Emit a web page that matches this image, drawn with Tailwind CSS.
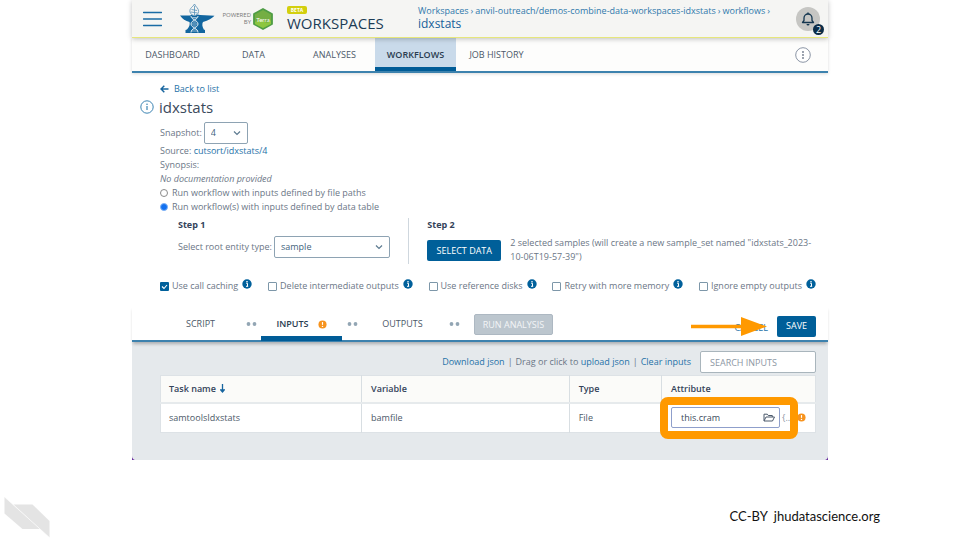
<!DOCTYPE html>
<html lang="en">
<head>
<meta charset="utf-8">
<meta name="viewport" content="width=device-width, initial-scale=1">
<title>idxstats - Workspaces</title>
<script src="https://cdn.jsdelivr.net/npm/@tailwindcss/browser@4"></script>
</head>
<body class="min-h-screen flex flex-col bg-white font-['Open_Sans','Noto_Sans',sans-serif] text-[9px] leading-[14px] text-[#6b7686]">

<svg class="hidden" aria-hidden="true">
  <symbol id="info" viewBox="0 0 10 10"><circle cx="5" cy="5" r="4.7" fill="#00609b"/><path d="M4.2 4.3h1.3v2.9M4 7.3h2.2" stroke="#fff" stroke-width="1" fill="none"/><circle cx="5" cy="2.7" r=".8" fill="#fff"/></symbol>
  <symbol id="warn" viewBox="0 0 10 10"><circle cx="5" cy="5" r="4.5" fill="#f7931e"/><path d="M5 2.3v3.1" stroke="#fff" stroke-width="1.3"/><circle cx="5" cy="7.1" r=".8" fill="#fff"/></symbol>
  <symbol id="chevron" viewBox="0 0 8 8"><path d="M1 2.5l3 3 3-3" fill="none" stroke="#5c7a90" stroke-width="1.2"/></symbol>
</svg>

<div class="relative w-[72.5%] mx-auto">
  <header class="relative z-10 flex items-center h-[38px] pl-[11px] pr-1 bg-[#f5f5f3] border-b border-[#e6e67c] shadow-[0_1px_5px_rgba(0,0,0,0.25)]">
    <button aria-label="Menu" class="shrink-0">
      <svg class="w-[19px] h-4 block" viewBox="0 0 19 16"><path d="M.5 1.5h18M.5 8h18M.5 14.5h18" stroke="#1a6ca5" stroke-width="1.5" stroke-linecap="round"/></svg>
    </button>
    <svg class="w-[35px] h-[30px] ml-[18px] shrink-0" viewBox="0 0 35 30" aria-label="AnVIL">
      <path d="M0 11.500h10Q14.500 9.500 20 11l14.500.8Q31 15.500 23 18q-1.700 3 .8 7.500l1.200.5v3H5.500v-3l1.500-.5q3.500-4 2.500-7.500Q3.500 16.500 0 11.500z" fill="#12669f"/>
      <path d="M14.500 0c-1.500 3-5.300 4-4.500 8 .6 2.500 3 3.500 4.500 3.500S18.500 10 18.600 7.500C18.700 4 15.500 3 14.500 0z" fill="#f5f5f3" stroke="#6f9fc0" stroke-width="1"/>
      <path d="M11.500 5.500l5.500 1M11 8l6.500 1M14.500 2v9" stroke="#5590b8" stroke-width=".8"/>
      <path d="M11 12c0 4 7 4 7 8s-7 4-7 8.500M18 12c0 4-7 4-7 8s7 4 7 8.500" fill="none" stroke="#e8f0f5" stroke-width="1"/>
      <path d="M12 13.500h5M13 15h3M12.500 18h4M11.500 20h6M12.500 22h4M13 25h3M11.500 27h6" stroke="#c8dce9" stroke-width=".7"/>
    </svg>
    <div class="ml-1 w-8 text-right text-[6px] leading-[7px] text-[#777] shrink-0">POWERED<br>BY</div>
    <svg class="w-[22px] h-[22px] ml-[1px] shrink-0" viewBox="0 0 22 22" aria-label="Terra">
      <path d="M11 1l9 5v10l-9 5-9-5V6z" fill="#74ae43" stroke="#4f9d45" stroke-width="1.800" stroke-linejoin="round"/>
      <path d="M3 14q6-5 9-1t7-1v4l-8 4-8-4z" fill="#8cc63f"/>
      <text x="11" y="13.500" text-anchor="middle" font-family="Lato, sans-serif" font-size="6" fill="#fff">Terra</text>
    </svg>
    <div class="ml-[13px] w-[131px] shrink-0">
      <div class="w-5 h-2 rounded-xs bg-[#d3cf0e] text-white font-bold text-[5px] leading-[8px] text-center">BETA</div>
      <div class="text-[15px] leading-[18px] font-medium text-[#1c3c56]">WORKSPACES</div>
    </div>
    <nav aria-label="Breadcrumb" class="text-[#3079ac] leading-[12px] whitespace-nowrap -mt-[2px]">
      <div class="flex gap-[2px]"><a href="#">Workspaces</a><span>›</span><a href="#">anvil-outreach/demos-combine-data-workspaces-idxstats</a><span>›</span><a href="#">workflows</a><span>›</span></div>
      <div class="text-[12px] leading-[13px] font-medium text-[#17609a]">idxstats</div>
    </nav>
    <button aria-label="Notifications" class="relative ml-auto mr-1 w-6 h-6 rounded-full bg-[#c6c6c3] grid place-items-center shrink-0">
      <svg class="w-3.5 h-3.5" viewBox="0 0 14 14"><path d="M1.500 10.500h11L11 8.500V6a4 4 0 0 0-8 0v2.500z" fill="none" stroke="#14364f" stroke-width="1.300" stroke-linejoin="round"/><path d="M7 .5v1.500" stroke="#14364f" stroke-width="1.400"/><path d="M5.500 12h3a1.500 1.500 0 0 1-3 0z" fill="#14364f"/></svg>
      <span class="absolute -right-1 -bottom-1 w-[11px] h-[11px] rounded-full bg-[#0b2c47] text-white text-[9px] leading-[11px] text-center">2</span>
    </button>
  </header>

  <nav aria-label="Workspace" class="flex h-[35px] bg-[#fdfdfc] border-b-2 border-[#3d82ae] text-center leading-[34px] text-[#4b5868] shadow-[0_1px_3px_rgba(0,0,0,0.15)] whitespace-nowrap">
    <a href="#" class="w-[81px]">DASHBOARD</a>
    <a href="#" class="w-[81px]">DATA</a>
    <a href="#" class="w-[81px]">ANALYSES</a>
    <a href="#" class="w-[81px] bg-[#c9daea] border-b-4 border-[#005c97] font-semibold text-[#2a3c50]">WORKFLOWS</a>
    <a href="#" class="w-[81px]">JOB HISTORY</a>
    <button aria-label="Workspace menu" class="ml-auto mr-[17px]">
      <svg class="w-4 h-4 block" viewBox="0 0 16 16"><circle cx="8" cy="8" r="7.300" fill="#fff" stroke="#8b95a5"/><g fill="#6d7889"><circle cx="8" cy="5" r=".9"/><circle cx="8" cy="8" r=".9"/><circle cx="8" cy="11" r=".9"/></g></svg>
    </button>
  </nav>

  <main>
    <div class="pl-7 pr-3 pt-[9px]">
      <a href="#" class="flex items-center gap-[5px] font-medium text-[#2672a8]">
        <svg class="w-[9px] h-2" viewBox="0 0 9 8"><path d="M8.500 4H1M4.300.8L1 4l3.300 3.200" fill="none" stroke="#17659f" stroke-width="1.500"/></svg>Back to list</a>
      <div class="flex items-center h-[22px] gap-[5px] -ml-5">
        <svg class="w-[14px] h-[14px]" viewBox="0 0 14 14" aria-label="Info"><circle cx="7" cy="7" r="6.200" fill="none" stroke="#3c84b3"/><path d="M7 6v4" stroke="#3c84b3" stroke-width="1.200"/><circle cx="7" cy="4.200" r=".8" fill="#3c84b3"/></svg>
        <h1 class="text-[15px] leading-5 text-[#3b4a5c]">idxstats</h1>
      </div>
      <div class="flex items-center gap-[2px] mt-1">
        <label for="snap">Snapshot:</label>
        <div class="relative">
          <select id="snap" class="appearance-none block w-11 h-[22px] pl-[6px] border border-[#8ea3b3] rounded-xs bg-white text-[#42637c]"><option>4</option></select>
          <svg class="absolute right-[7px] top-[7px] w-2 h-2 pointer-events-none"><use href="#chevron"/></svg>
        </div>
      </div>
      <div>Source: <a href="#" class="font-medium text-[#2672a8]">cutsort/idxstats/4</a></div>
      <div>Synopsis:</div>
      <div class="italic">No documentation provided</div>
      <label class="flex items-center gap-1 h-[14px]"><input type="radio" name="mode" class="appearance-none w-2 h-2 rounded-full border border-[#8a8a8a] bg-white">Run workflow with inputs defined by file paths</label>
      <label class="flex items-center gap-1 h-[14px]"><input type="radio" name="mode" checked class="appearance-none w-2 h-2 rounded-full border border-[#7fb2f5] bg-[#1170f0]">Run workflow(s) with inputs defined by data table</label>

      <div class="flex mt-1 h-[46px]">
        <section class="w-[38%] pl-[18px] border-r border-[#cfd7de]">
          <h2 class="font-bold text-[#34435a]">Step 1</h2>
          <div class="flex items-center gap-[2px] mt-1 whitespace-nowrap">
            <label for="ent">Select root entity type:</label>
            <div class="relative">
              <select id="ent" class="appearance-none block w-[116px] h-[22px] pl-[6px] border border-[#8ea3b3] rounded-xs bg-white text-[#42637c]"><option>sample</option></select>
              <svg class="absolute right-[7px] top-[7px] w-2 h-2 pointer-events-none"><use href="#chevron"/></svg>
            </div>
          </div>
        </section>
        <section class="flex-1 pl-[18px]">
          <h2 class="font-bold text-[#34435a]">Step 2</h2>
          <div class="flex gap-[9px] mt-1">
            <button class="w-[74px] h-[21px] mt-1 rounded-xs bg-[#005f99] text-white shrink-0">SELECT DATA</button>
            <p class="flex-1">2 selected samples (will create a new sample_set named "idxstats_2023-<wbr>10-06T19-57-39")</p>
          </div>
        </section>
      </div>

      <div class="flex justify-between mt-4 h-3 whitespace-nowrap">
        <div class="flex items-center gap-1"><label class="flex items-center gap-[3px]"><span class="relative flex"><input type="checkbox" checked class="appearance-none w-[9px] h-[9px] rounded-[1px] bg-[#00609b]"><svg class="absolute inset-0 w-[9px] h-[9px] pointer-events-none" viewBox="0 0 9 9"><path d="M2 4.500l2 2 3-3.500" stroke="#fff" fill="none" stroke-width="1.100"/></svg></span>Use call caching</label><svg class="w-[10px] h-[10px] -mt-1"><use href="#info"/></svg></div>
        <div class="flex items-center gap-1"><label class="flex items-center gap-[3px]"><input type="checkbox" class="appearance-none w-[9px] h-[9px] border border-[#7d97a9] rounded-[1px]">Delete intermediate outputs</label><svg class="w-[10px] h-[10px] -mt-1"><use href="#info"/></svg></div>
        <div class="flex items-center gap-1"><label class="flex items-center gap-[3px]"><input type="checkbox" class="appearance-none w-[9px] h-[9px] border border-[#7d97a9] rounded-[1px]">Use reference disks</label><svg class="w-[10px] h-[10px] -mt-1"><use href="#info"/></svg></div>
        <div class="flex items-center gap-1"><label class="flex items-center gap-[3px]"><input type="checkbox" class="appearance-none w-[9px] h-[9px] border border-[#7d97a9] rounded-[1px]">Retry with more memory</label><svg class="w-[10px] h-[10px] -mt-1"><use href="#info"/></svg></div>
        <div class="flex items-center gap-1"><label class="flex items-center gap-[3px]"><input type="checkbox" class="appearance-none w-[9px] h-[9px] border border-[#7d97a9] rounded-[1px]">Ignore empty outputs</label><svg class="w-[10px] h-[10px] -mt-1"><use href="#info"/></svg></div>
      </div>
    </div>

    <div class="relative flex mt-[14px] h-9 pl-7 pr-3 border-b-2 border-[#3d82ae] shadow-[0_3px_3px_-1px_rgba(0,0,0,0.25)] text-center leading-[36px] text-[#4b5868]">
      <a href="#" class="w-[81px]">SCRIPT</a>
      <svg class="w-5 h-9" viewBox="0 0 20 36" fill="#93a6b4"><circle cx="7.500" cy="18" r="1.900"/><circle cx="13.500" cy="18" r="1.900"/></svg>
      <a href="#" class="w-[81px] h-[35px] border-b-5 border-[#005c97] flex justify-center items-center gap-[9px] pt-[6px] font-semibold text-[#2a3c50]">INPUTS<svg class="w-[9px] h-[9px]"><use href="#warn"/></svg></a>
      <svg class="w-5 h-9" viewBox="0 0 20 36" fill="#93a6b4"><circle cx="7.500" cy="18" r="1.900"/><circle cx="13.500" cy="18" r="1.900"/></svg>
      <a href="#" class="w-[81px]">OUTPUTS</a>
      <svg class="w-5 h-9" viewBox="0 0 20 36" fill="#93a6b4"><circle cx="8.500" cy="18" r="1.900"/><circle cx="14.500" cy="18" r="1.900"/></svg>
      <button disabled class="self-center mt-[2px] ml-[11px] w-[79px] h-[21px] rounded-xs border border-[#adb8c2] bg-[#bcc6ce] text-[#f3f5f7] leading-[19px]">RUN ANALYSIS</button>
      <button class="relative ml-auto mr-[9px] pt-1 font-medium text-[#2672a8]">CANCEL
        <svg class="absolute right-0 top-[11px] w-[77px] h-[19px] max-w-none" viewBox="0 0 77 19" aria-hidden="true"><path d="M0 7.700h50V0l26 9.500L50 19v-7.700H0z" fill="#ff9900"/></svg>
      </button>
      <button class="self-center mt-[6px] w-[39px] h-[21px] rounded-xs bg-[#005f99] text-white font-medium leading-5">SAVE</button>
    </div>

    <div class="bg-[#e5e9ec] h-[118px] pl-7 pr-3 pt-[9px]">
      <div class="flex justify-end items-center gap-[3px] whitespace-nowrap">
        <a href="#" class="font-medium text-[#2672a8]">Download json</a><span>|</span><span>Drag or click to <a href="#" class="font-medium text-[#2672a8]">upload json</a></span><span>|</span><a href="#" class="font-medium text-[#2672a8]">Clear inputs</a>
        <input type="search" aria-label="Search inputs" placeholder="SEARCH INPUTS" class="ml-[6px] w-[116px] h-[22px] px-[9px] bg-white border border-[#a9b5bc] rounded-xs placeholder:text-[#8c96a3]">
      </div>
      <table class="mt-[2px] w-full table-fixed border-collapse bg-white border border-[#dde2e6] text-left text-[#4b5868]">
        <colgroup><col class="w-[30.700%]"><col class="w-[31.700%]"><col class="w-[14.100%]"><col></colgroup>
        <thead class="bg-[#fbfbf9] text-[#34435a]">
          <tr class="h-[27px] border-b-2 border-[#e6eaec]">
            <th class="pl-2 font-semibold border-r border-[#d8dee2]"><span class="flex items-center gap-1">Task name<svg class="w-[5px] h-[9px]" viewBox="0 0 5 9"><path d="M2.500 0v7M.8 6l1.700 2 1.700-2z" fill="#17659f" stroke="#17659f" stroke-width="1.300"/></svg></span></th>
            <th class="pl-[9px] font-semibold border-r border-[#d8dee2]">Variable</th>
            <th class="pl-[9px] font-semibold border-r border-[#d8dee2]">Type</th>
            <th class="pl-[9px] font-semibold">Attribute</th>
          </tr>
        </thead>
        <tbody>
          <tr class="h-[30px]">
            <td class="pl-2 border-r border-[#d8dee2]">samtoolsIdxstats</td>
            <td class="pl-[9px] border-r border-[#d8dee2]">bamfile</td>
            <td class="pl-[9px] border-r border-[#d8dee2]">File</td>
            <td class="pl-[9px]">
              <div class="relative flex items-center">
                <input aria-label="Attribute" value="this.cram" class="w-[109px] h-[21px] px-[9px] bg-white border border-[#8f9fcb] rounded-xs text-[#3b4a5c]">
                <svg class="-ml-[17px] w-3 h-[9px]" viewBox="0 0 12 9"><path d="M1 7.800V1.200h3.300l1 1.300h4V4M1 8l2-4h8.500L9.500 8z" fill="none" stroke="#4c5a6c" stroke-linejoin="round"/></svg>
                <button aria-label="JSON value" class="ml-[7px] w-[10px] text-left text-[#8b95a5]">{...</button>
                <svg class="absolute left-[126px] w-[9px] h-[9px]"><use href="#warn"/></svg>
                <span class="absolute -left-[11px] -top-[10px] w-[138px] h-[42px] border-8 border-[#ff9900] rounded-lg pointer-events-none"></span>
              </div>
            </td>
          </tr>
        </tbody>
      </table>
    </div>
  </main>
  <svg class="absolute left-0 bottom-0 w-[3px] h-1" viewBox="0 0 3 4" aria-hidden="true"><path d="M0 0q0 3 3 4H0z" fill="#6a2fa0"/></svg>
  <svg class="absolute right-0 bottom-0 w-[3px] h-1" viewBox="0 0 3 4" aria-hidden="true"><path d="M3 0q0 3-3 4h3z" fill="#6a2fa0"/></svg>
</div>

<footer class="mt-auto flex items-end justify-between pl-1 pr-20 pb-[2px]">
  <svg class="w-[46px] h-[42px]" viewBox="0 0 46 42" aria-hidden="true"><path d="M.5 1v16.500L18.500 33H36z" fill="#e4e4e4"/><path d="M9.500 8.500h19L45.500 25v16.500z" fill="#e4e4e4"/><path d="M.5 1l45 40.500" stroke="#fff" stroke-width=".5"/></svg>
  <p class="flex gap-[6px] pb-[14px] font-['Lato',sans-serif] text-[13px] leading-4 text-[#111]"><span>CC-BY</span> <span>jhudatascience.org</span></p>
</footer>
</body>
</html>
